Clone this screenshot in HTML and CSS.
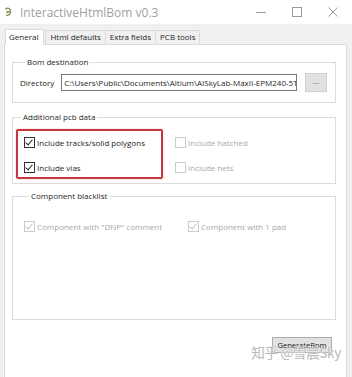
FILE: index.html
```html
<!DOCTYPE html>
<html lang="en">
<head>
  <meta charset="UTF-8">
  <title>InteractiveHtmlBom v0.3</title>
  <link rel="stylesheet" href="styles.css">
</head>
<body>
  <div class="window">
    <div class="titlebar">
      <svg class="app-icon" width="8" height="11" viewBox="0 0 8 11">
        <path d="M1.5 2.2 C3 0.6 6.6 1 6.6 4.2 C6.6 7 4.4 8.8 2.2 8.4 M2.8 6.2 C2.6 4.2 4.8 3.8 5 5.6" fill="none" stroke="#8a8a5a" stroke-width="1.4"/>
      </svg>
      <span class="title">InteractiveHtmlBom v0.3</span>
      <div class="controls">
        <svg width="12" height="12" viewBox="0 0 12 12"><path d="M1 6.5 H11" stroke="#9a9a9a" stroke-width="1"/></svg>
        <svg width="12" height="12" viewBox="0 0 12 12"><rect x="1.5" y="1.5" width="9" height="9" fill="none" stroke="#9a9a9a" stroke-width="1"/></svg>
        <svg width="12" height="12" viewBox="0 0 12 12"><path d="M1.5 1.5 L10.5 10.5 M10.5 1.5 L1.5 10.5" stroke="#9a9a9a" stroke-width="1"/></svg>
      </div>
    </div>

    <div class="client">
      <div class="tabs">
        <div class="tab active">General</div>
        <div class="tab">Html defaults</div>
        <div class="tab">Extra fields</div>
        <div class="tab">PCB tools</div>
      </div>

      <div class="panel">
        <fieldset class="group bom">
          <legend>Bom destination</legend>
          <div class="dir-row">
            <span class="label">Directory</span>
            <div class="path">C:\Users\Public\Documents\Altium\AISkyLab-MaxII-EPM240-5T</div>
            <div class="browse">...</div>
          </div>
        </fieldset>

        <fieldset class="group pcb">
          <legend>Additional pcb data</legend>
          <div class="cols">
            <div class="col highlight">
              <div class="check"><span class="box on"></span>Include tracks/solid polygons</div>
              <div class="check"><span class="box on"></span>Include vias</div>
            </div>
            <div class="col">
              <div class="check off"><span class="box"></span>Include hatched</div>
              <div class="check off"><span class="box"></span>Include nets</div>
            </div>
          </div>
        </fieldset>

        <fieldset class="group blacklist">
          <legend>Component blacklist</legend>
          <div class="bl-row">
            <div class="check off"><span class="box on"></span>Component with "DNP" comment</div>
            <div class="check off"><span class="box on"></span>Component with 1 pad</div>
          </div>
        </fieldset>

        <div class="actions">
          <div class="gen-btn">GenerateBom</div>
          <span class="watermark">知乎 @雪晨Sky</span>
        </div>
      </div>
    </div>
  </div>
</body>
</html>
```

FILE: styles.css
```css
body {
  margin: 0;
  font-family: "Open Sans", "Noto Sans", sans-serif;
  font-size: 8px;
  color: #1e1e1e;
  background-color: #f0f0f0;
}
.window {
  width: 352px;
  height: 377px;
  background-color: #f0f0f0;
  overflow: hidden;
}
.titlebar {
  height: 24px;
  background-color: #fff;
  display: flex;
  align-items: center;
  padding-left: 4px;
}
.app-icon {
  margin-right: 8px;
}
.title {
  font-size: 12px;
  color: #a0a0a0;
}
.controls {
  margin-left: auto;
  display: flex;
  gap: 24px;
  padding-right: 13px;
}
.client {
  padding: 0 5px 5px 4px;
}
.tabs {
  display: flex;
  height: 20px;
  align-items: flex-end;
  padding-left: 2px;
  position: relative;
  z-index: 1;
}
.tab {
  height: 13px;
  line-height: 12px;
  padding: 0 4px;
  border: 1px solid #dadada;
  border-bottom: none;
  margin-left: -1px;
  background-color: #f0f0f0;
}
.tab.active {
  height: 15px;
  line-height: 13px;
  background-color: #fff;
  margin-bottom: -1px;
  padding: 0 5px 0 3px;
  margin-right: 2px;
}
.panel {
  background-color: #fff;
  border: 1px solid #dadada;
  height: 326px;
  padding: 11px 10px 0 7px;
}
.group {
  border: 1px solid #dcdcdc;
  margin: 0;
  padding: 0;
  min-width: 0;
}
.group legend {
  padding: 0 2px;
  margin-left: 5px;
  line-height: 12px;
}
.bom {
  padding: 5px 8px 10px 7px;
}
.dir-row {
  display: flex;
  align-items: center;
  height: 19px;
}
.label {
  margin-right: 7px;
}
.path {
  width: 238px;
  height: 17px;
  line-height: 15px;
  border: 1px solid #7a7a7a;
  padding-left: 2px;
  white-space: nowrap;
  overflow: hidden;
  box-sizing: border-box;
}
.browse {
  width: 22px;
  height: 19px;
  margin-left: 8px;
  background-color: #e1e1e1;
  border: 1px solid #cfcfcf;
  box-sizing: border-box;
  text-align: center;
  line-height: 14px;
  color: #444;
}
.pcb {
  margin-top: 8px;
  padding: 6px 0 4px 3px;
}
.cols {
  display: flex;
  gap: 4px;
}
.col {
  width: 147px;
  box-sizing: border-box;
  padding: 4px 0 3px 6px;
  border: 2px solid transparent;
  display: flex;
  flex-direction: column;
  gap: 11px;
}
.col.highlight {
  border-color: #c4373c;
  border-radius: 2px;
  box-shadow: 0 0 2px rgba(196, 55, 60, 0.35);
}
.check {
  display: flex;
  align-items: center;
  height: 14px;
  white-space: nowrap;
}
.check.off {
  color: #a8a8a8;
}
.box {
  width: 9px;
  height: 9px;
  border: 1px solid #333;
  margin-right: 2px;
  position: relative;
  flex-shrink: 0;
}
.check.off .box {
  border-color: #cccccc;
}
.box.on::after {
  content: "";
  position: absolute;
  left: 2px;
  top: 0px;
  width: 3px;
  height: 6px;
  border: solid #222;
  border-width: 0 1.2px 1.2px 0;
  transform: rotate(40deg);
}
.check.off .box.on::after {
  border-color: #c4c4c4;
}
.blacklist {
  margin-top: 6px;
  padding: 17px 0 86px 11px;
}
.bl-row {
  display: flex;
}
.bl-row .check {
  width: 164px;
  flex-shrink: 0;
}
.bl-row .check + .check {
  width: auto;
}
.actions {
  display: flex;
  justify-content: flex-end;
  margin-top: 17px;
  padding-right: 4px;
  position: relative;
}
.gen-btn {
  width: 60px;
  height: 16px;
  background-color: #e1e1e1;
  border: 1px solid #adadad;
  box-sizing: border-box;
  text-align: center;
  line-height: 15px;
  font-size: 7.5px;
  color: #222;
}
.watermark {
  position: absolute;
  right: -5px;
  top: 5px;
  font-family: "Noto Sans CJK SC", sans-serif;
  font-size: 13.5px;
  color: #b8b8b8;
  text-shadow: 0 0 1px #fff, 0 0 1px #fff;
  letter-spacing: -0.3px;
}
```
